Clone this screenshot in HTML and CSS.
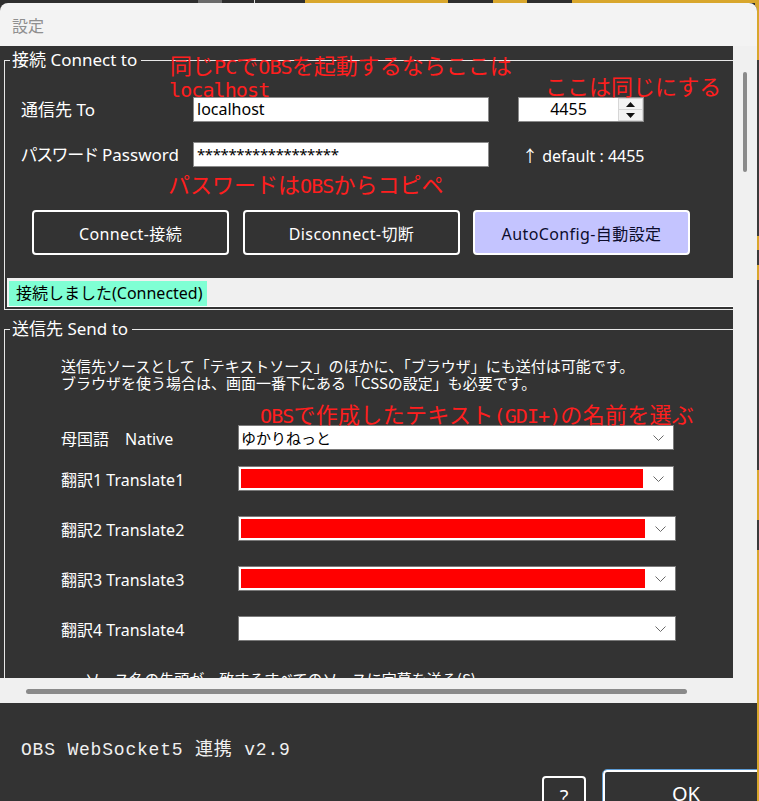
FILE: index.html
```html
<!DOCTYPE html>
<html lang="ja">
<head>
<meta charset="utf-8">
<title>設定</title>
<link rel="stylesheet" href="styles.css">
</head>
<body>
<div class="window">
  <div class="titlebar">設定</div>

  <div class="client">
    <div class="viewport">
      <div class="content">
        <fieldset class="group group-connect">
          <legend>接続 Connect to</legend>

          <div class="form-row row-host">
            <span class="field-label">通信先 To</span>
            <div class="textbox">localhost</div>
            <div class="spinbox">
              <span class="spin-value">4455</span>
              <span class="spin-buttons">
                <span class="spin-btn"><svg width="9" height="5" viewBox="0 0 9 5"><polygon points="4.5,0 9,5 0,5" fill="#111"/></svg></span>
                <span class="spin-btn"><svg width="9" height="5" viewBox="0 0 9 5"><polygon points="0,0 9,0 4.5,5" fill="#111"/></svg></span>
              </span>
            </div>
          </div>

          <div class="form-row row-pass">
            <span class="field-label">パスワード Password</span>
            <div class="textbox masked">******************</div>
            <span class="hint">↑ default : 4455</span>
          </div>

          <div class="button-row">
            <button class="btn">Connect-接続</button>
            <button class="btn btn-wide">Disconnect-切断</button>
            <button class="btn btn-wide btn-accent">AutoConfig-自動設定</button>
          </div>

          <div class="statusbar"><span class="status-ok">接続しました(Connected)</span></div>
        </fieldset>

        <fieldset class="group group-send">
          <legend>送信先 Send to</legend>

          <p class="note">送信先ソースとして「テキストソース」のほかに、「ブラウザ」にも送付は可能です。<br>ブラウザを使う場合は、画面一番下にある「CSSの設定」も必要です。</p>

          <div class="source-row first">
            <span class="source-label">母国語　Native</span>
            <div class="combo">
              <span class="combo-value">ゆかりねっと</span>
              <span class="combo-arrow"><svg width="11" height="6" viewBox="0 0 11 6"><polyline points="0.5,0.5 5.5,5.5 10.5,0.5" fill="none" stroke="#6a6a6a" stroke-width="1"/></svg></span>
            </div>
          </div>

          <div class="source-row second">
            <span class="source-label">翻訳1 Translate1</span>
            <div class="combo">
              <span class="combo-fill"></span>
              <span class="combo-arrow"><svg width="11" height="6" viewBox="0 0 11 6"><polyline points="0.5,0.5 5.5,5.5 10.5,0.5" fill="none" stroke="#6a6a6a" stroke-width="1"/></svg></span>
            </div>
          </div>

          <div class="source-row">
            <span class="source-label">翻訳2 Translate2</span>
            <div class="combo combo-long">
              <span class="combo-fill"></span>
              <span class="combo-arrow"><svg width="11" height="6" viewBox="0 0 11 6"><polyline points="0.5,0.5 5.5,5.5 10.5,0.5" fill="none" stroke="#6a6a6a" stroke-width="1"/></svg></span>
            </div>
          </div>

          <div class="source-row">
            <span class="source-label">翻訳3 Translate3</span>
            <div class="combo combo-long">
              <span class="combo-fill"></span>
              <span class="combo-arrow"><svg width="11" height="6" viewBox="0 0 11 6"><polyline points="0.5,0.5 5.5,5.5 10.5,0.5" fill="none" stroke="#6a6a6a" stroke-width="1"/></svg></span>
            </div>
          </div>

          <div class="source-row">
            <span class="source-label">翻訳4 Translate4</span>
            <div class="combo combo-long">
              <span class="combo-value"></span>
              <span class="combo-arrow"><svg width="11" height="6" viewBox="0 0 11 6"><polyline points="0.5,0.5 5.5,5.5 10.5,0.5" fill="none" stroke="#6a6a6a" stroke-width="1"/></svg></span>
            </div>
          </div>

          <p class="check-line">ソース名の先頭が一致するすべてのソースに字幕を送る(S)</p>
        </fieldset>
      </div>

      <!-- hand-written red notes laid over the form -->
      <div class="annot a-host">同じ<span class="lat">PC</span>で<span class="lat">OBS</span>を起動するならここは</div>
      <div class="annot a-local"><span class="lat">localhost</span></div>
      <div class="annot a-port">ここは同じにする</div>
      <div class="annot a-pass">パスワードは<span class="lat">OBS</span>からコピペ</div>
      <div class="annot a-source"><span class="lat">OBS</span>で作成したテキスト<span class="lat">(GDI+)</span>の名前を選ぶ</div>
    </div>

    <div class="vscroll"><div class="vthumb"></div></div>
    <div class="hscroll"><div class="hthumb"></div></div>
  </div>

  <div class="footer">
    <span class="version">OBS WebSocket5 連携 v2.9</span>
    <button class="help-btn">?</button>
    <button class="ok-btn">OK</button>
  </div>
</div>
</body>
</html>
```

FILE: styles.css
```css
:root {
  --ui: "Noto Sans", "Noto Sans CJK JP", sans-serif;
  --panel: #333333;
  --light: #f0f0f0;
}

html, body {
  margin: 0;
  height: 801px;
  overflow: hidden;
}

/* desktop peeking out behind the dialog */
body {
  font-family: var(--ui);
  background:
    linear-gradient(to right,
      #2e2e2e 0 198px, #6a6a6a 198px 222px, #2e2e2e 222px 254px,
      #dcdcdc 254px 255px, #2e2e2e 255px 305px, #d8a62c 305px 448px,
      #2e2e2e 448px 493px, #d8a62c 493px 527px, #2e2e2e 527px 572px,
      #d8a62c 572px) top left / 100% 3px no-repeat,
    linear-gradient(to bottom,
      #d8a62c 0 60px, #3a3a3a 60px 236px, #d8a62c 236px 250px,
      #3a3a3a 250px 265px, #d8a62c 265px 280px, #3a3a3a 280px 470px,
      #d8a62c 470px 520px, #3a3a3a 520px 550px, #d8a62c 550px 801px) top right / 4px 100% no-repeat,
    #2e2e2e;
}

.window {
  margin-top: 3px;
  width: 757px;
  height: 798px;
  background: var(--panel);
  border-radius: 8px 8px 0 0;
  overflow: hidden;
  display: flex;
  flex-direction: column;
}

.titlebar {
  flex: none;
  height: 43px;
  box-sizing: border-box;
  padding-left: 12px;
  display: flex;
  align-items: center;
  background: #f3f3f3;
  color: #8f8f8f;
  font: 16px "Noto Sans CJK JP", sans-serif;
}

/* scrolling client area with its two scroll bars */
.client {
  flex: none;
  display: grid;
  grid-template-columns: 733px 24px;
  grid-template-rows: 632px 25px;
}

.viewport {
  position: relative;
  overflow: hidden;
  background: var(--panel);
}

.content {
  width: 780px;
  padding-top: 4px;
}

.vscroll {
  background: var(--light);
}

.vthumb {
  margin: 26px 0 0 10px;
  width: 4px;
  height: 100px;
  border-radius: 2px;
  background: #8a8a8a;
}

.hscroll {
  grid-column: 1 / -1;
  background: var(--light);
}

.hthumb {
  margin: 11px 0 0 26px;
  width: 661px;
  height: 5px;
  border-radius: 3px;
  background: #8a8a8a;
}

/* group boxes */
.group {
  margin: 0 0 0 4px;
  padding: 0 0 2px 2px;
  width: 770px;
  box-sizing: border-box;
  border: 1px solid #e8e8e8;
  border-right: none;
  color: #fff;
}

.group legend {
  margin-left: 3px;
  padding: 0 4px 0 2px;
  font-size: 17px;
  line-height: 20px;
  color: #fff;
}

.group-send {
  margin-top: 9px;
  border-bottom: none;
}

.form-row {
  display: flex;
  align-items: center;
  height: 25px;
  margin-left: 14px;
}

.row-host { margin-top: 27px; }
.row-pass { margin-top: 20px; }

.field-label {
  width: 172px;
  padding-bottom: 3px;
  font-size: 17px;
  font-feature-settings: "palt";
  color: #fff;
}

.textbox {
  width: 296px;
  height: 25px;
  box-sizing: border-box;
  padding-left: 3px;
  background: #fff;
  border: 1px solid #8a8a8a;
  color: #000;
  font-size: 16px;
  line-height: 23px;
}

.textbox.masked {
  font-size: 15px;
  letter-spacing: -0.4px;
}

.spinbox {
  margin-left: 29px;
  width: 126px;
  height: 25px;
  box-sizing: border-box;
  display: flex;
  background: #fff;
  border: 1px solid #8a8a8a;
  color: #000;
}

.spin-value {
  flex: 1;
  text-align: center;
  font-size: 16px;
  line-height: 23px;
}

.spin-buttons {
  width: 23px;
  display: flex;
  flex-direction: column;
  gap: 1px;
  padding: 1px;
  background: #d6d6d6;
}

.spin-btn {
  flex: 1;
  display: flex;
  align-items: center;
  justify-content: center;
  background: #f3f3f3;
}

.hint {
  margin-left: 33px;
  font-size: 16px;
  color: #fff;
}

.button-row {
  display: flex;
  margin: 43px 0 0 25px;
}

.btn {
  width: 197px;
  height: 45px;
  padding: 0;
  box-sizing: border-box;
  border: 2px solid #fff;
  border-radius: 4px;
  background: var(--panel);
  color: #fff;
  font: 16px var(--ui);
  letter-spacing: 0.4px;
}

.btn-wide {
  width: 217px;
  margin-left: 14px;
}

.btn-wide + .btn-wide { margin-left: 13px; }

.btn-accent {
  background: #c4c4ff;
  color: #0c0c2c;
}

.statusbar {
  margin-top: 23px;
  height: 28px;
  display: flex;
  align-items: flex-end;
  background: var(--light);
  border-bottom: 1px solid #fff;
}

.status-ok {
  margin-left: 2px;
  width: 198px;
  height: 25px;
  box-sizing: border-box;
  padding-left: 7px;
  background: #7fffd4;
  color: #000;
  font-size: 16px;
  line-height: 24px;
}

/* send-to section */
.note {
  margin: 18px 0 0 54px;
  font-size: 15px;
  line-height: 17px;
  color: #fff;
  font-family: "Noto Sans CJK JP", sans-serif;
}

.source-row {
  display: flex;
  align-items: center;
  height: 25px;
  margin: 25px 0 0 54px;
}

.source-row.first { margin-top: 34px; }
.source-row.second { margin-top: 16px; }

.source-label {
  width: 177px;
  font-size: 16px;
  color: #fff;
}

.combo {
  width: 436px;
  height: 25px;
  box-sizing: border-box;
  display: flex;
  background: #fff;
  border: 1px solid #7a7a7a;
}

.combo-long { width: 438px; }

.combo-fill {
  flex: 1;
  margin: 2px 0 2px 2px;
  background: #ff0000;
}

.combo-value {
  flex: 1;
  padding-left: 2px;
  color: #000;
  font: 15px/23px "Noto Sans CJK JP", sans-serif;
}

.combo-arrow {
  width: 30px;
  display: flex;
  align-items: center;
  justify-content: center;
}

.check-line {
  margin: 28px 0 0 78px;
  font: 15px/20px "Noto Sans CJK JP", sans-serif;
  color: #fff;
  white-space: nowrap;
}

/* red notes written over the form */
.annot {
  position: absolute;
  color: #ff1e1e;
  font: 22px/22px "Noto Sans CJK JP", sans-serif;
  white-space: nowrap;
}

.annot .lat {
  font-family: "DejaVu Sans Mono", monospace;
  font-size: 20px;
  letter-spacing: -0.9px;
}

.a-host { left: 170px; top: 7px; }
.a-local { left: 169px; top: 30px; }
.a-port { left: 545px; top: 28px; }
.a-pass { left: 168px; top: 126px; }
.a-source { left: 260px; top: 356px; letter-spacing: 0.3px; }

/* bottom strip */
.footer {
  flex: none;
  height: 98px;
  display: flex;
  align-items: flex-start;
  padding-left: 21px;
  background: var(--panel);
}

.version {
  margin-top: 37px;
  color: #f0f0f0;
  font: 18px/20px "Liberation Mono", "Noto Sans CJK JP", monospace;
  letter-spacing: 0.8px;
}

.help-btn,
.ok-btn {
  flex: none;
  padding: 0;
  box-sizing: border-box;
  border: 2px solid #fff;
  border-radius: 4px;
  background: var(--panel);
  color: #fff;
  font: 20px var(--ui);
}

.help-btn {
  margin: 73px 0 0 auto;
  width: 44px;
  height: 40px;
}

.ok-btn {
  margin: 67px -12px 0 17px;
  width: 166px;
  height: 46px;
  outline: 1px solid #5b9bd5;
}
```
